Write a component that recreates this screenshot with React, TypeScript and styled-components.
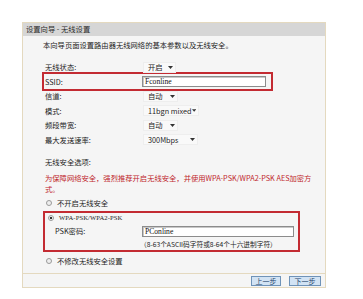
import React from "react";
import styled, { createGlobalStyle } from "styled-components";

const GlobalStyle = createGlobalStyle`
  body {
    margin: 0;
    background: #ffffff;
    font-family: "Noto Sans CJK SC", "Noto Sans", sans-serif;
    font-size: 7.3px;
    color: #1c1c1c;
  }
`;

const Page = styled.div`
  padding: 22px 0 0 22px;
`;

const Panel = styled.div`
  width: 302px;
  border: 1px solid #e4d9bf;
  background: #f5f5f5;
`;

const Header = styled.div`
  height: 13px;
  line-height: 13px;
  padding-left: 3px;
  background: #d6d6d6;
  color: #2a2a2a;
  white-space: nowrap;
`;

const Body = styled.div`
  padding: 3px 0 0 19px;
`;

const Intro = styled.div`
  line-height: 12px;
  padding-left: 1px;
  white-space: nowrap;
`;

const Form = styled.div`
  margin-top: 8.75px;
`;

const Row = styled.div`
  display: grid;
  grid-template-columns: 98px 1fr;
  align-items: center;
  height: 14.5px;
  padding-left: 3px;
  white-space: nowrap;
`;

const Highlight = styled.div<{ $width: number }>`
  width: ${(p) => p.$width}px;
  box-sizing: border-box;
  border: 2px solid #c32b32;
`;

const SsidBox = styled(Highlight)`
  margin: -2.25px 0 -2.25px 0;
  height: 19px;
  display: flex;
  align-items: center;

  & > ${Row} {
    padding-left: 1px;
    width: 100%;
    grid-template-columns: 97px 1fr;
  }
`;

const Select = styled.span<{ $width: number }>`
  display: inline-flex;
  align-items: center;
  justify-content: space-between;
  box-sizing: border-box;
  width: ${(p) => p.$width}px;
  height: 11px;
  padding: 0 2px 0 4px;
  background: #f9f9f9;
  border: 1px solid #eeeeee;
  color: #1c1c1c;
`;

const TextInput = styled.span<{ $width: number }>`
  display: inline-flex;
  align-items: center;
  box-sizing: border-box;
  width: ${(p) => p.$width}px;
  height: 11px;
  padding-left: 2px;
  background: #ffffff;
  border: 1px solid #8c8c8c;
  box-shadow: inset 1px 1px 0 #c8c8c8;
  font-family: "Liberation Serif", "Noto Sans CJK SC", serif;
  font-size: 7.6px;
  color: #111;
`;

const Section = styled.div`
  margin-top: 9.25px;
  padding-left: 3px;
  line-height: 12px;
`;

const Warning = styled.p`
  margin: 4.5px 0 0 0;
  padding-left: 3px;
  line-height: 11px;
  color: #c0262c;
  white-space: nowrap;
`;

const RadioRow = styled.div<{ $top: number }>`
  display: flex;
  align-items: center;
  gap: 5px;
  margin-top: ${(p) => p.$top}px;
  padding-left: 4px;
  height: 12px;
  white-space: nowrap;
`;

const RadioDot = styled.span<{ $on?: boolean }>`
  width: 6px;
  height: 6px;
  border-radius: 50%;
  box-sizing: border-box;
  border: 1px solid #9a9a9a;
  background: ${(p) =>
    p.$on
      ? "radial-gradient(circle, #333 0 1.4px, #fff 1.6px)"
      : "#eeeeee"};
`;

const SecurityBox = styled(Highlight)`
  margin: 2px 0 0 1px;
  padding-bottom: 1px;

  & > ${RadioRow} {
    height: 9px;
    padding-left: 3px;
  }
`;

const WpaLabel = styled.span`
  font-family: "Liberation Serif", serif;
  font-size: 6.6px;
  letter-spacing: 0.1px;
`;

const PskRow = styled.div`
  display: grid;
  grid-template-columns: 87px 1fr;
  align-items: center;
  margin-top: 3.5px;
  padding-left: 10px;
  height: 11px;
  white-space: nowrap;
`;

const Hint = styled.div`
  margin-top: 2.5px;
  padding-left: 95px;
  line-height: 10px;
  font-size: 6.7px;
  color: #1c1c1c;
  white-space: nowrap;
`;

const Footer = styled.div`
  margin-top: 6px;
  height: 13px;
  border-top: 1px solid #e4d9bf;
  display: flex;
  justify-content: flex-end;
  align-items: center;
  gap: 8px;
  padding-right: 4px;
`;

const Button = styled.button<{ $width: number }>`
  width: ${(p) => p.$width}px;
  height: 10px;
  padding: 0;
  border: 1px solid #6f93b8;
  background: #d2e3f4;
  color: #1f3f6a;
  font-family: inherit;
  font-size: 7px;
  line-height: 8px;
`;

const Arrow = () => (
  <svg width="5" height="3" viewBox="0 0 5 3">
    <path d="M0 0h5L2.5 3z" fill="#333" />
  </svg>
);

const selects: { label: string; value: string; width: number }[] = [
  { label: "信道:", value: "自动", width: 35 },
  { label: "模式:", value: "11bgn mixed", width: 56 },
  { label: "频段带宽:", value: "自动", width: 35 },
  { label: "最大发送速率:", value: "300Mbps", width: 55 },
];

export default function App() {
  return (
    <Page>
      <GlobalStyle />
      <Panel>
        <Header>设置向导 - 无线设置</Header>
        <Body>
          <Intro>本向导页面设置路由器无线网络的基本参数以及无线安全。</Intro>
          <Form>
            <Row>
              <span>无线状态:</span>
              <span>
                <Select $width={33}>
                  开启 <Arrow />
                </Select>
              </span>
            </Row>
            <SsidBox $width={231}>
              <Row>
                <span>SSID:</span>
                <span>
                  <TextInput $width={124}>Fconline</TextInput>
                </span>
              </Row>
            </SsidBox>
            {selects.map((s) => (
              <Row key={s.label}>
                <span>{s.label}</span>
                <span>
                  <Select $width={s.width}>
                    {s.value} <Arrow />
                  </Select>
                </span>
              </Row>
            ))}
          </Form>

          <Section>无线安全选项:</Section>
          <Warning>
            为保障网络安全，强烈推荐开启无线安全，并使用WPA-PSK/WPA2-PSK AES加密方
            <br />
            式。
          </Warning>

          <RadioRow $top={2.5}>
            <RadioDot />
            不开启无线安全
          </RadioRow>

          <SecurityBox $width={257}>
            <RadioRow $top={0}>
              <RadioDot $on />
              <WpaLabel>WPA-PSK/WPA2-PSK</WpaLabel>
            </RadioRow>
            <PskRow>
              <span>PSK密码:</span>
              <span>
                <TextInput $width={152}>PConline</TextInput>
              </span>
            </PskRow>
            <Hint>（8-63个ASCII码字符或8-64个十六进制字符）</Hint>
          </SecurityBox>

          <RadioRow $top={3}>
            <RadioDot />
            不修改无线安全设置
          </RadioRow>
        </Body>
        <Footer>
          <Button $width={30}>上一步</Button>
          <Button $width={32}>下一步</Button>
        </Footer>
      </Panel>
    </Page>
  );
}
